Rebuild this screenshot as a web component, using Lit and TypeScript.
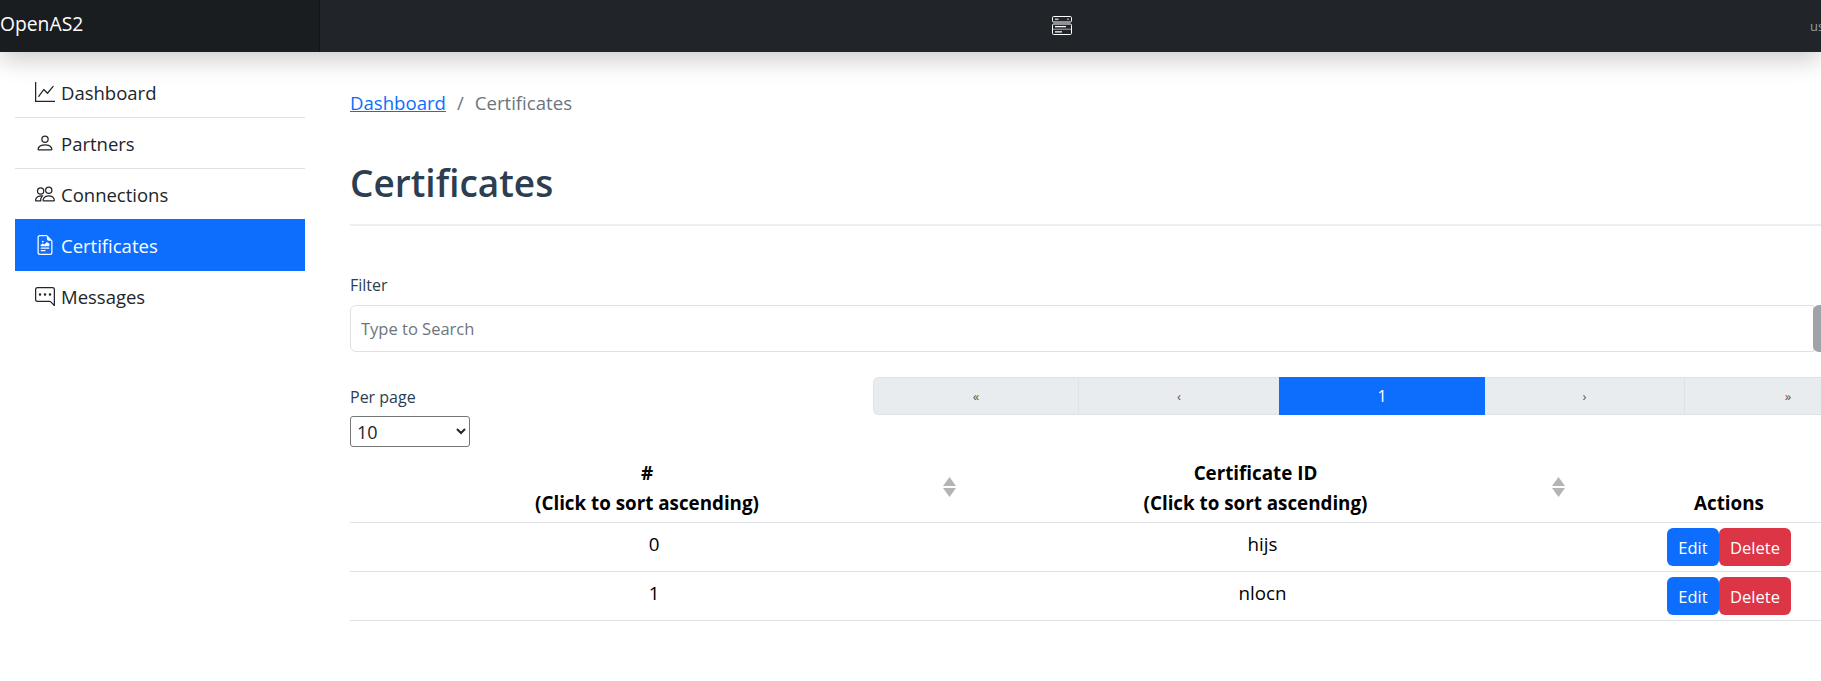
import { LitElement, html, css, svg } from "lit";
import { customElement } from "lit/decorators.js";

const icons: Record<string, unknown> = {
  graph: svg`<path fill-rule="evenodd" d="M0 0h1v15h15v1H0V0Zm14.817 3.113a.5.5 0 0 1 .07.704l-4.5 5.5a.5.5 0 0 1-.74.037L7.06 6.767l-3.656 5.027a.5.5 0 0 1-.808-.588l4-5.5a.5.5 0 0 1 .758-.06l2.609 2.61 4.15-5.073a.5.5 0 0 1 .704-.07Z"/>`,
  person: svg`<path d="M8 8a3 3 0 1 0 0-6 3 3 0 0 0 0 6Zm2-3a2 2 0 1 1-4 0 2 2 0 0 1 4 0Zm4 8c0 1-1 1-1 1H3s-1 0-1-1 1-4 6-4 6 3 6 4Zm-1-.004c-.001-.246-.154-.986-.832-1.664C11.516 10.68 10.289 10 8 10c-2.29 0-3.516.68-4.168 1.332-.678.678-.83 1.418-.832 1.664h10Z"/>`,
  people: svg`<path d="M15 14s1 0 1-1-1-4-5-4-5 3-5 4 1 1 1 1h8Zm-7.978-1A.261.261 0 0 1 7 12.996c.001-.264.167-1.03.76-1.72C8.312 10.629 9.282 10 11 10c1.717 0 2.687.63 3.24 1.276.593.69.758 1.457.76 1.72l-.008.002a.274.274 0 0 1-.014.002H7.022ZM11 7a2 2 0 1 0 0-4 2 2 0 0 0 0 4Zm3-2a3 3 0 1 1-6 0 3 3 0 0 1 6 0ZM6.936 9.28a5.88 5.88 0 0 0-1.23-.247A7.35 7.35 0 0 0 5 9c-4 0-5 3-5 4 0 .667.333 1 1 1h4.216A2.238 2.238 0 0 1 5 13c0-1.01.377-2.042 1.09-2.904.243-.294.526-.569.846-.816ZM4.92 10A5.493 5.493 0 0 0 4 13H1c0-.26.164-1.03.76-1.724.545-.636 1.492-1.256 3.16-1.275ZM1.5 5.5a3 3 0 1 1 6 0 3 3 0 0 1-6 0Zm3-2a2 2 0 1 0 0 4 2 2 0 0 0 0-4Z"/>`,
  file: svg`<path d="M14 4.5V14a2 2 0 0 1-2 2H4a2 2 0 0 1-2-2V2a2 2 0 0 1 2-2h5.5L14 4.5zm-3 0A1.5 1.5 0 0 1 9.5 3V1H4a1 1 0 0 0-1 1v12a1 1 0 0 0 1 1h8a1 1 0 0 0 1-1V4.5h-2z"/><path d="M4.5 12.5A.5.5 0 0 1 5 12h3a.5.5 0 0 1 0 1H5a.5.5 0 0 1-.5-.5zm0-2A.5.5 0 0 1 5 10h6a.5.5 0 0 1 0 1H5a.5.5 0 0 1-.5-.5zm1.639-3.708 1.33.886 1.854-1.855a.25.25 0 0 1 .289-.047l1.888.974V8.5a.5.5 0 0 1-.5.5H5a.5.5 0 0 1-.5-.5V8s1.54-1.274 1.639-1.208zM6.25 6a.75.75 0 1 0 0-1.5.75.75 0 0 0 0 1.5z"/>`,
  chat: svg`<path d="M2 1a1 1 0 0 0-1 1v8a1 1 0 0 0 1 1h9.586a2 2 0 0 1 1.414.586l2 2V2a1 1 0 0 0-1-1H2zm12-1a2 2 0 0 1 2 2v12.793a.5.5 0 0 1-.854.353l-2.853-2.853a1 1 0 0 0-.707-.293H2a2 2 0 0 1-2-2V2a2 2 0 0 1 2-2h12z"/><path d="M5 6a1 1 0 1 1-2 0 1 1 0 0 1 2 0zm4 0a1 1 0 1 1-2 0 1 1 0 0 1 2 0zm4 0a1 1 0 1 1-2 0 1 1 0 0 1 2 0z"/>`,
};

const navItems = [
  { label: "Dashboard", icon: "graph" },
  { label: "Partners", icon: "person" },
  { label: "Connections", icon: "people" },
  { label: "Certificates", icon: "file", active: true },
  { label: "Messages", icon: "chat" },
];

const pages = [
  { label: "«", cls: "first" },
  { label: "‹", cls: "sep" },
  { label: "1", cls: "current" },
  { label: "›", cls: "" },
  { label: "»", cls: "sep" },
];

const rows = [
  { id: "0", name: "hijs" },
  { id: "1", name: "nlocn" },
];

@customElement("app-root")
export class AppRoot extends LitElement {
  static styles = css`
    :host {
      display: block;
      width: 1821px;
      height: 681px;
      overflow: hidden;
      background: #fff;
      font-family: "Open Sans", "Noto Sans", sans-serif;
      color: #212529;
    }
    .topbar {
      position: relative;
      z-index: 2;
      display: flex;
      align-items: center;
      height: 52px;
      background: #212529;
      box-shadow: 0 8px 24px rgba(0, 0, 0, 0.2);
    }
    .brand {
      flex: none;
      width: 320px;
      height: 52px;
      line-height: 47px;
      font-size: 19.3px;
      color: #fff;
      background: #1a1d20;
      box-shadow: inset -1px 0 0 rgba(0, 0, 0, 0.25);
    }
    .toggler {
      flex: none;
      width: 20px;
      height: 20px;
      margin-left: 732px;
      color: #fff;
      display: flex;
    }
    .user {
      flex: none;
      margin-left: 738px;
      margin-top: -1px;
      font-size: 13px;
      color: #9a9da0;
      white-space: nowrap;
    }
    .layout {
      display: flex;
      width: 1900px;
    }
    .sidebar {
      flex: none;
      width: 290px;
      margin: 15px 0 0 15px;
    }
    .nav-item {
      display: flex;
      align-items: center;
      gap: 6px;
      box-sizing: border-box;
      height: 51px;
      padding: 0 0 0 20px;
      font-size: 18.5px;
      color: #212529;
      border-bottom: 1px solid #dee2e6;
    }
    .nav-item:nth-child(3) {
      height: 50px;
      border-bottom: 0;
    }
    .nav-item:last-child {
      border-bottom: 0;
    }
    .nav-item.active {
      background: #0d6efd;
      color: #fff;
      height: 52px;
      border-bottom: 0;
    }
    .nav-item svg {
      flex: none;
      width: 20px;
      height: 20px;
    }
    .main {
      flex: none;
      width: 1541px;
      margin-left: 45px;
    }
    .crumbs {
      display: flex;
      align-items: center;
      height: 30px;
      margin-top: 35px;
      font-size: 18.6px;
      color: #6c757d;
    }
    .crumbs a {
      color: #0d6efd;
      text-decoration: underline;
    }
    .crumbs .slash {
      margin: 0 11px;
    }
    h1 {
      margin: 38px 0 0;
      height: 56px;
      line-height: 56px;
      font-size: 37px;
      font-weight: 600;
      color: #2c3e50;
    }
    hr {
      margin: 13px 0 0;
      border: 0;
      border-top: 2px solid #eceef0;
    }
    .field-label {
      display: block;
      margin-top: 47px;
      height: 24px;
      line-height: 24px;
      font-size: 16px;
      color: #2c3e50;
    }
    .search-row {
      display: flex;
      margin-top: 8px;
    }
    .search {
      box-sizing: border-box;
      flex: none;
      width: 1464px;
      height: 47px;
      padding: 0 10px;
      border: 1px solid #dee2e6;
      border-radius: 6px 0 0 6px;
      font: 16.5px "Open Sans", "Noto Sans", sans-serif;
      color: #212529;
      outline: none;
    }
    .search::placeholder {
      color: #6c757d;
      opacity: 1;
    }
    .search-btn {
      flex: none;
      width: 60px;
      height: 47px;
      background: #9fa3a9;
      border-radius: 6px 0 0 6px;
      margin-left: -1px;
    }
    .controls {
      display: flex;
      justify-content: space-between;
      margin-top: 25px;
      height: 70px;
    }
    .per-page label {
      display: block;
      height: 39px;
      line-height: 40px;
      font-size: 16px;
      color: #2c3e50;
    }
    .per-page select {
      display: block;
      width: 120px;
      height: 31px;
      padding: 0 0 0 2px;
      background: #fff;
      border: 1px solid #767676;
      border-radius: 3px;
      font: 18px "Open Sans", "Noto Sans", sans-serif;
      color: #212529;
    }
    .pager {
      display: grid;
      grid-template-columns: 205px 201px 206px 199px 207px;
      height: 38px;
      box-sizing: border-box;
    }
    .page {
      display: flex;
      align-items: center;
      justify-content: center;
      box-sizing: border-box;
      background: #e9ecef;
      border-top: 1px solid #dee2e6;
      border-bottom: 1px solid #dee2e6;
      font-size: 13px;
      color: #4d5560;
    }
    .page.first {
      border-left: 1px solid #dee2e6;
      border-radius: 6px 0 0 6px;
    }
    .page.sep {
      border-left: 1px solid #dee2e6;
    }
    .page.current {
      background: #0d6efd;
      border-color: #0d6efd;
      color: #fff;
      font-size: 16px;
    }
    table {
      width: 1541px;
      table-layout: fixed;
      border-collapse: collapse;
      color: #000;
    }
    col.c1 { width: 608px; }
    col.c2 { width: 609px; }
    col.c3 { width: 324px; }
    th {
      position: relative;
      box-sizing: border-box;
      padding: 11px 14px 4px 0;
      vertical-align: bottom;
      text-align: center;
      font-size: 18.8px;
      font-weight: 700;
      line-height: 30px;
      border-bottom: 1px solid #dee2e6;
    }
    th.actions {
      padding-right: 0;
    }
    .sort {
      position: absolute;
      right: 2px;
      top: 30px;
      width: 13px;
      height: 20px;
      fill: #b4b4b4;
    }
    td {
      box-sizing: border-box;
      height: 49px;
      padding: 7px 0 0;
      vertical-align: top;
      text-align: center;
      font-size: 18.8px;
      line-height: 29px;
      border-bottom: 1px solid #dee2e6;
    }
    td.btns {
      padding-top: 5px;
    }
    .btn-group {
      display: flex;
      justify-content: center;
    }
    button {
      box-sizing: border-box;
      height: 38px;
      padding: 0;
      border: 0;
      border-radius: 6px;
      font: 16.5px "Open Sans", "Noto Sans", sans-serif;
      color: #fff;
    }
    .edit {
      width: 52px;
      background: #0d6efd;
    }
    .delete {
      width: 72px;
      background: #dc3545;
    }
  `;

  render() {
    return html`
      <header class="topbar">
        <div class="brand">OpenAS2</div>
        <div class="toggler">
          <svg viewBox="0 0 20 20" width="20" height="20" fill="none" stroke="currentColor">
            <rect x="0.5" y="0.5" width="19" height="5.5" rx="1.2" stroke-width="1"></rect>
            <rect x="0.5" y="8" width="19" height="10.5" rx="1.2" stroke-width="1"></rect>
            <path d="M3 3.2h3.5M16 2.5v1.6" stroke-width="1.5" opacity="0.7"></path>
            <path d="M0.5 13.2h19" stroke-width="1" opacity="0.6"></path>
            <path d="M3 10.7h11M3 15.8h7" stroke-width="1.2"></path>
          </svg>
        </div>
        <div class="user">user</div>
      </header>
      <div class="layout">
        <nav class="sidebar">
          ${navItems.map(
            (n) => html`
              <div class="nav-item ${n.active ? "active" : ""}">
                <svg viewBox="0 0 16 16" fill="currentColor">${icons[n.icon]}</svg>
                <span>${n.label}</span>
              </div>
            `
          )}
        </nav>
        <main class="main">
          <div class="crumbs">
            <a href="#">Dashboard</a><span class="slash">/</span><span>Certificates</span>
          </div>
          <h1>Certificates</h1>
          <hr />
          <label class="field-label">Filter</label>
          <div class="search-row">
            <input class="search" placeholder="Type to Search" />
            <div class="search-btn"></div>
          </div>
          <div class="controls">
            <div class="per-page">
              <label>Per page</label>
              <select><option>10</option></select>
            </div>
            <div class="pager">
              ${pages.map((p) => html`<div class="page ${p.cls}">${p.label}</div>`)}
            </div>
          </div>
          <table>
            <colgroup><col class="c1" /><col class="c2" /><col class="c3" /></colgroup>
            <thead>
              <tr>
                <th>
                  #<br />(Click to sort ascending)
                  <svg class="sort" viewBox="0 0 13 20"><path d="M6.5 0 13 9H0zM0 11h13l-6.5 9z"></path></svg>
                </th>
                <th>
                  Certificate ID<br />(Click to sort ascending)
                  <svg class="sort" viewBox="0 0 13 20"><path d="M6.5 0 13 9H0zM0 11h13l-6.5 9z"></path></svg>
                </th>
                <th class="actions">Actions</th>
              </tr>
            </thead>
            <tbody>
              ${rows.map(
                (r) => html`
                  <tr>
                    <td>${r.id}</td>
                    <td>${r.name}</td>
                    <td class="btns">
                      <div class="btn-group">
                        <button class="edit">Edit</button><button class="delete">Delete</button>
                      </div>
                    </td>
                  </tr>
                `
              )}
            </tbody>
          </table>
        </main>
      </div>
    `;
  }
}
